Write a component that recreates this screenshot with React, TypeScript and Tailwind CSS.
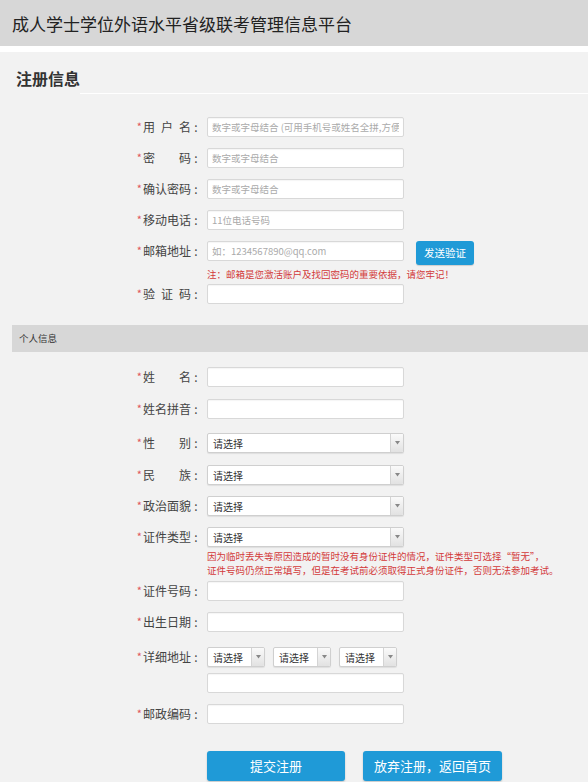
import React from "react";

const FONT = '"Microsoft YaHei", "Noto Sans CJK SC", "Noto Sans", sans-serif';

function Label({ chars }: { chars: string[] }) {
  return (
    <div className="w-[201px] shrink-0 flex justify-end items-center text-[12px] text-[#444] leading-none">
      <span className="text-[#e0575a] text-[11px] mr-[1px] relative top-[-1px]">*</span>
      <span className="w-[48px] flex justify-between">
        {chars.map((c, i) => (
          <span key={i}>{c}</span>
        ))}
      </span>
      <span className="w-[10px] text-center">:</span>
    </div>
  );
}

function TextInput({ placeholder, w = "w-[197px]" }: { placeholder?: string; w?: string }) {
  return (
    <input
      className={`${w} h-[20px] border border-[#d8d8d8] bg-white rounded-[2px] px-[4px] text-[9.5px] text-[#333] placeholder:text-[#aaa] outline-none shadow-[inset_0_1px_1px_rgba(0,0,0,0.04)]`}
      style={{ fontFamily: FONT }}
      placeholder={placeholder}
    />
  );
}

function Select({ wide = true }: { wide?: boolean }) {
  return (
    <div
      className={`${wide ? "w-[197px]" : "w-[58px]"} h-[20px] flex border border-[#cfcfcf] bg-white rounded-[2px] shadow-[0_1px_1px_rgba(0,0,0,0.08)] overflow-hidden`}
    >
      <div className="flex-1 flex items-center pl-[5px] text-[10px] text-[#333]">请选择</div>
      <div className="w-[13px] flex items-center justify-center border-l border-[#d4d4d4] bg-gradient-to-b from-[#fafafa] to-[#e2e2e2]">
        <svg width="5" height="4" viewBox="0 0 5 4">
          <path d="M0 0 L5 0 L2.5 3.5 Z" fill="#888" />
        </svg>
      </div>
    </div>
  );
}

function Row({ chars, children, mt }: { chars: string[]; children: React.ReactNode; mt: string }) {
  return (
    <div className={`flex items-center h-[20px] ${mt}`}>
      <Label chars={chars} />
      <div className="ml-[6px] flex items-center">{children}</div>
    </div>
  );
}

function Note({ children, mt }: { children: React.ReactNode; mt: string }) {
  return (
    <div className={`pl-[207px] ${mt} text-[9.5px] leading-[14px] text-[#d23a3a] whitespace-nowrap`}>{children}</div>
  );
}

export default function App() {
  return (
    <div className="min-h-screen bg-[#f2f2f2] text-[#333] overflow-hidden" style={{ fontFamily: FONT }}>
      <div className="h-[46px] bg-[#d7d7d7] flex items-center pl-[12px]">
        <span className="text-[17px] text-[#222] leading-none">成人学士学位外语水平省级联考管理信息平台</span>
      </div>
      <div className="h-[6px] bg-white" />
      <div className="flex items-end h-[42px]">
        <div className="pl-[16px] pb-[8px] text-[16px] font-bold text-[#333] leading-none">注册信息</div>
        <div className="flex-1 border-b border-white" />
      </div>

      <Row chars={["用", "户", "名"]} mt="mt-[23px]">
        <TextInput placeholder="数字或字母结合 (可用手机号或姓名全拼,方便记忆)" />
      </Row>
      <Row chars={["密", "码"]} mt="mt-[11px]">
        <TextInput placeholder="数字或字母结合" />
      </Row>
      <Row chars={["确", "认", "密", "码"]} mt="mt-[11px]">
        <TextInput placeholder="数字或字母结合" />
      </Row>
      <Row chars={["移", "动", "电", "话"]} mt="mt-[11px]">
        <TextInput placeholder="11位电话号码" />
      </Row>
      <div className="flex items-start h-[20px] mt-[11px]">
        <div className="h-[20px] flex items-center">
          <Label chars={["邮", "箱", "地", "址"]} />
        </div>
        <div className="ml-[6px] flex items-start">
          <TextInput placeholder="如：1234567890@qq.com" />
          <button className="ml-[12px] w-[58px] h-[24px] rounded-[3px] bg-[#1f9ad7] text-white text-[10.5px] shadow-[0_1px_1px_rgba(0,0,0,0.15)]">
            发送验证
          </button>
        </div>
      </div>
      <Note mt="mt-[6px]">注：邮箱是您激活账户及找回密码的重要依据，请您牢记！</Note>
      <Row chars={["验", "证", "码"]} mt="mt-[3px]">
        <TextInput />
      </Row>

      <div className="ml-[12px] mt-[21px] h-[27px] bg-[#d7d7d7] flex items-center pl-[7px] text-[9.5px] text-[#333]">
        个人信息
      </div>

      <Row chars={["姓", "名"]} mt="mt-[15px]">
        <TextInput />
      </Row>
      <Row chars={["姓", "名", "拼", "音"]} mt="mt-[12px]">
        <TextInput />
      </Row>
      <Row chars={["性", "别"]} mt="mt-[14px]">
        <Select />
      </Row>
      <Row chars={["民", "族"]} mt="mt-[12px]">
        <Select />
      </Row>
      <Row chars={["政", "治", "面", "貌"]} mt="mt-[11px]">
        <Select />
      </Row>
      <Row chars={["证", "件", "类", "型"]} mt="mt-[11px]">
        <Select />
      </Row>
      <Note mt="mt-[2px]">
        因为临时丢失等原因造成的暂时没有身份证件的情况，证件类型可选择“暂无”，
        <br />
        证件号码仍然正常填写，但是在考试前必须取得正式身份证件，否则无法参加考试。
      </Note>
      <Row chars={["证", "件", "号", "码"]} mt="mt-[4px]">
        <TextInput />
      </Row>
      <Row chars={["出", "生", "日", "期"]} mt="mt-[11px]">
        <TextInput />
      </Row>
      <Row chars={["详", "细", "地", "址"]} mt="mt-[15px]">
        <div className="flex gap-[8px]">
          <Select wide={false} />
          <Select wide={false} />
          <Select wide={false} />
        </div>
      </Row>
      <div className="pl-[207px] mt-[6px] h-[20px] flex">
        <TextInput />
      </div>
      <Row chars={["邮", "政", "编", "码"]} mt="mt-[11px]">
        <TextInput />
      </Row>

      <div className="pl-[207px] mt-[27px] flex gap-[18px]">
        <button className="w-[138px] h-[30px] rounded-[3px] bg-[#1f9ad7] text-white text-[13px] shadow-[0_1px_2px_rgba(0,0,0,0.2)]">
          提交注册
        </button>
        <button className="w-[139px] h-[30px] rounded-[3px] bg-[#1f9ad7] text-white text-[13px] shadow-[0_1px_2px_rgba(0,0,0,0.2)]">
          放弃注册，返回首页
        </button>
      </div>
      <div className="h-[40px]" />
    </div>
  );
}
